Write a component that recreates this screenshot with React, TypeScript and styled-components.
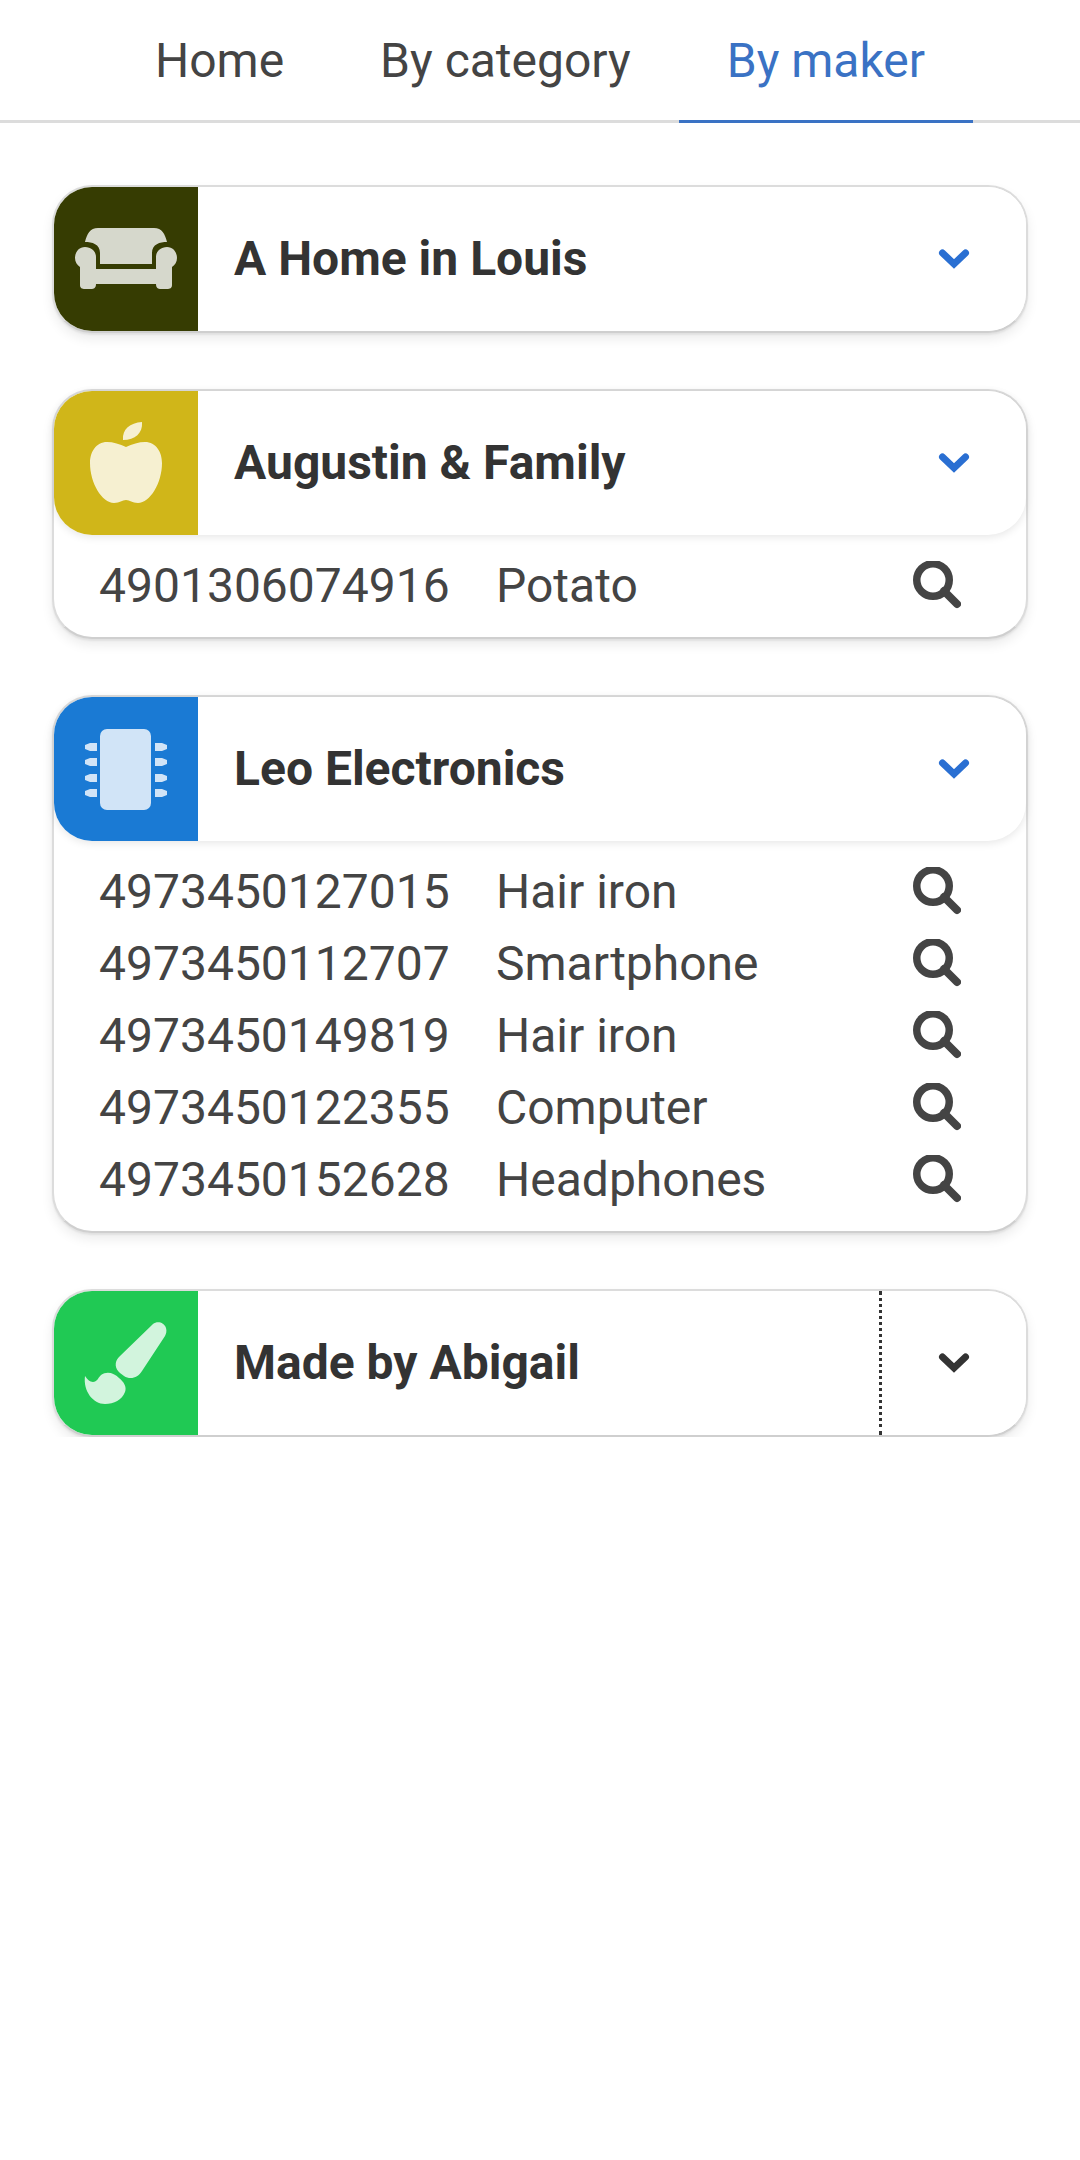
import React from 'react';
import styled, { createGlobalStyle } from 'styled-components';

const GlobalStyle = createGlobalStyle`
  html, body {
    margin: 0;
    padding: 0;
    background: #fff;
    font-family: Roboto, "Liberation Sans", sans-serif;
  }
`;

type Product = { code: string; name: string };

type Maker = {
  id: string;
  name: string;
  color: string;
  icon: React.ReactNode;
  products: Product[];
  focused?: boolean;
};

// Icons are drawn on the 144px tile
const SofaIcon = () => (
  <svg width="144" height="144" viewBox="0 0 144 144" fill="#fff" fillOpacity="0.8">
    <path d="M31 55 C33 47 36 41 44 41 H100 C108 41 111 47 113 55 C106 55 98 57 98 66 V77 H46 V66 C46 57 38 55 31 55Z" />
    <path d="M31 60 C37 60 42 64 42 70 V82 H102 V70 C102 64 107 60 113 60 C119 60 123 65 123 71 C123 75 121 78 118 80 V98 C118 101 116 102 113 102 H107 C104 102 102 101 102 97 H42 C42 101 40 102 37 102 H31 C28 102 26 101 26 98 V80 C23 78 21 75 21 71 C21 65 25 60 31 60Z" />
  </svg>
);

const AppleIcon = () => (
  <svg width="144" height="144" viewBox="0 0 144 144" fill="#fff" fillOpacity="0.8">
    <path d="M72 56 C66 53 59 51 53 51 C42 51 36 61 36 72 C36 92 48 112 60 112 C66 112 68 109 72 109 C76 109 78 112 84 112 C96 112 108 92 108 72 C108 61 102 51 91 51 C85 51 78 53 72 56Z" />
    <path d="M69 49 C68 38 76 32 88 31 C89 42 81 49 69 49Z" />
  </svg>
);

const ChipIcon = () => (
  <svg width="144" height="144" viewBox="0 0 144 144" fill="#fff" fillOpacity="0.8">
    <rect x="46" y="32" width="51" height="81" rx="7" />
    {[50, 65, 81, 96].map((y) => (
      <g key={y}>
        <path d={`M43 ${y - 4} V${y + 4} H36 L31 ${y + 2} V${y - 2} L36 ${y - 4}Z`} />
        <path d={`M101 ${y - 4} V${y + 4} H108 L113 ${y + 2} V${y - 2} L108 ${y - 4}Z`} />
      </g>
    ))}
  </svg>
);

const BrushIcon = () => (
  <svg width="144" height="144" viewBox="0 0 144 144" fill="#fff" fillOpacity="0.8">
    <path d="M99 33 C103 30 110 31 112 37 C113 40 112 43 111 45 L88 80 C84 87 76 89 70 85 L66 82 C61 78 60 71 65 66Z" />
    <path d="M31 85 C33 88 36 91 39 91 C43 91 44 87 47 84 C53 80 60 82 65 87 C70 91 73 96 71 101 C68 109 60 113 51 113 C39 113 29 100 31 85Z" />
  </svg>
);

const ChevronIcon = ({ color }: { color: string }) => (
  <svg width="32" height="22" viewBox="0 0 32 22" fill="none" stroke={color} strokeWidth="7" strokeLinecap="round" strokeLinejoin="miter">
    <path d="M4.5 5 L16 16 L27.5 5" />
  </svg>
);

const SearchIcon = () => (
  <svg width="48" height="48" viewBox="0 1 48 48" fill="none" stroke="#444">
    <circle cx="20" cy="20" r="16.25" strokeWidth="7.5" />
    <path d="M31 31 L44 44" strokeWidth="8" strokeLinecap="round" />
  </svg>
);

const makers: Maker[] = [
  { id: 'louis', name: 'A Home in Louis', color: '#363c02', icon: <SofaIcon />, products: [] },
  {
    id: 'augustin',
    name: 'Augustin & Family',
    color: '#d0b619',
    icon: <AppleIcon />,
    products: [{ code: '4901306074916', name: 'Potato' }],
  },
  {
    id: 'leo',
    name: 'Leo Electronics',
    color: '#1a7ad4',
    icon: <ChipIcon />,
    products: [
      { code: '4973450127015', name: 'Hair iron' },
      { code: '4973450112707', name: 'Smartphone' },
      { code: '4973450149819', name: 'Hair iron' },
      { code: '4973450122355', name: 'Computer' },
      { code: '4973450152628', name: 'Headphones' },
    ],
  },
  { id: 'abigail', name: 'Made by Abigail', color: '#20c954', icon: <BrushIcon />, products: [], focused: true },
];

const tabs = ['Home', 'By category', 'By maker'];

const App: React.FC = () => (
  <>
    <GlobalStyle />
    <TabBar>
      {tabs.map((tab) => (
        <Tab key={tab} $active={tab === 'By maker'}>
          {tab}
        </Tab>
      ))}
    </TabBar>
    <MakerList>
      {makers.map((maker) => (
        <MakerCard key={maker.id}>
          <MakerHeader $raised={maker.products.length > 0}>
            <MakerIcon $color={maker.color}>{maker.icon}</MakerIcon>
            <MakerName>{maker.name}</MakerName>
            <ToggleButton $focused={maker.focused}>
              <ChevronIcon color={maker.focused ? '#333' : '#2a6fd2'} />
            </ToggleButton>
          </MakerHeader>
          {maker.products.length > 0 && (
            <ProductList>
              {maker.products.map((product) => (
                <ProductRow key={product.code}>
                  <span>{product.code}</span>
                  <span>{product.name}</span>
                  <SearchIcon />
                </ProductRow>
              ))}
            </ProductList>
          )}
        </MakerCard>
      ))}
    </MakerList>
  </>
);

export default App;

const TabBar = styled.nav`
  display: flex;
  justify-content: center;
  height: 120px;
  border-bottom: 3px solid #dcdcdc;
`;

const Tab = styled.div<{ $active: boolean }>`
  display: flex;
  align-items: center;
  height: 123px;
  padding: 0 48px;
  box-sizing: border-box;
  font-size: 48px;
  color: ${(p) => (p.$active ? '#3a72c4' : '#444')};
  border-bottom: 3px solid ${(p) => (p.$active ? '#3a72c4' : 'transparent')};
`;

const MakerList = styled.main`
  display: flex;
  flex-direction: column;
  gap: 56px;
  padding: 62px 52px 0;
`;

const MakerCard = styled.section`
  border: 2px solid #dcdcdc;
  border-bottom-color: #cfcfcf;
  border-radius: 40px;
  background: #fff;
  box-shadow: 0 2px 2px rgba(0, 0, 0, 0.06), 0 6px 12px rgba(0, 0, 0, 0.08);
`;

const MakerHeader = styled.header<{ $raised: boolean }>`
  display: flex;
  align-items: stretch;
  height: 144px;
  border-radius: 38px;
  overflow: hidden;
  background: #fff;
  box-shadow: ${(p) => (p.$raised ? '0 2px 8px rgba(0, 0, 0, 0.1)' : 'none')};
`;

const MakerIcon = styled.div<{ $color: string }>`
  flex: 0 0 144px;
  height: 144px;
  background: ${(p) => p.$color};
`;

const MakerName = styled.h2`
  flex: 1;
  margin: 0;
  align-self: center;
  padding: 0 0 2px 36px;
  font-size: 48px;
  font-weight: 700;
  color: #333;
`;

const ToggleButton = styled.div<{ $focused?: boolean }>`
  flex: 0 0 147px;
  box-sizing: border-box;
  display: flex;
  align-items: center;
  justify-content: center;
  border-left: 3px ${(p) => (p.$focused ? 'dotted #333' : 'solid transparent')};
`;

const ProductList = styled.div`
  padding: 14px 0 16px;
`;

const ProductRow = styled.div`
  display: grid;
  grid-template-columns: 397px 1fr 48px;
  align-items: center;
  height: 72px;
  padding: 0 65px 0 45px;
  font-size: 48px;
  color: #444;
`;
